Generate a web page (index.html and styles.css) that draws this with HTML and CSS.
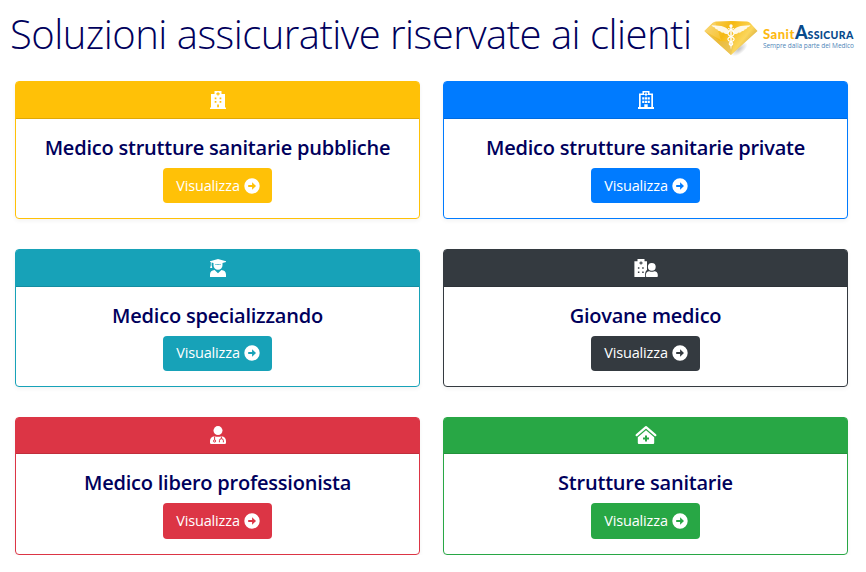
FILE: index.html
```
<!DOCTYPE html>
<html lang="it">
<head>
  <meta charset="UTF-8" />
  <meta name="viewport" content="width=device-width, initial-scale=1.0"/>
  <title>Soluzioni assicurative</title>
  <link rel="stylesheet" href="styles.css">
</head>
<body>

  <svg class="sprite" aria-hidden="true">
    <symbol id="arrow" viewBox="0 0 16 16">
      <path fill="currentColor" fill-rule="evenodd" d="M8 .3a7.700 7.700 0 1 0 0 15.400A7.700 7.700 0 0 0 8 .3zM4.200 6.900h3.900V4.200L12 8l-3.900 3.800V9.100H4.200z"/>
    </symbol>
  </svg>

  <header class="top">
    <h1>Soluzioni assicurative riservate ai clienti</h1>
    <div class="logo">
      <svg class="gem" width="54" height="36" viewBox="0 0 54 36">
        <defs>
          <linearGradient id="gold" x1="0" y1="0" x2="1" y2=".5">
            <stop offset="0" stop-color="#f9d46a"/>
            <stop offset=".45" stop-color="#f5b912"/>
            <stop offset=".8" stop-color="#fbd65c"/>
            <stop offset="1" stop-color="#d5a93c"/>
          </linearGradient>
          <radialGradient id="shade">
            <stop offset="0" stop-color="#999" stop-opacity=".6"/>
            <stop offset="1" stop-color="#999" stop-opacity="0"/>
          </radialGradient>
        </defs>
        <ellipse cx="35" cy="29" rx="10" ry="5" fill="url(#shade)" transform="rotate(-38 35 29)"/>
        <path fill="url(#gold)" d="M.3 11 8.500 3Q10 1.500 12 1.400 27 .4 43 1.400q2 .1 3.200 1.600L53.500 11 27 35z"/>
        <path fill="#e3bd58" opacity=".6" d="M.3 11 27 35l3-13-14-1z"/>
        <path fill="#fff" opacity=".15" d="M11 1.500 17 20 .3 11z"/>
        <g fill="#fff">
          <path d="M26 11.500C22 7 19 5.500 7.500 5.300c1 1.500 2 2 3.500 2.300-.3.900.9 1.700 2.500 1.900 0 1 1.200 1.700 2.800 1.700.3 1.100 1.700 1.700 3.200 1.400 1 1.400 3 1.900 4.500 1.200zM28 11.500C32 7 35 5.500 46.500 5.300c-1 1.500-2 2-3.500 2.300.3.900-.9 1.700-2.500 1.900 0 1-1.200 1.700-2.800 1.700-.3 1.100-1.700 1.700-3.200 1.400-1 1.400-3 1.900-4.500 1.200z" opacity=".88"/>
          <circle cx="27" cy="6" r="1.700"/>
          <path d="M26.300 7h1.400v18L27 30l-.7-5z"/>
        </g>
        <path fill="none" stroke="#fff" stroke-width="1.100" d="M24 8.500c6 1.500 8.500 6 3 8-4.500 1.800-4 4 0 5.300 2.800 1.200 2 3 0 3.800M30 8.500c-6 1.500-8.500 6-3 8 4.500 1.800 4 4 0 5.300-2.800 1.200-2 3 0 3.800"/>
      </svg>
      <div class="logo-text">
        <div class="brand"><span class="sanit">Sanit</span><span class="big">A</span><span class="rest">SSICURA</span></div>
        <div class="tagline">Sempre dalla parte del Medico</div>
      </div>
    </div>
  </header>

  <main class="cards">

    <div class="card warning">
      <div class="card-header">
        <svg width="18" height="18" viewBox="0 0 18 18">
          <path fill="currentColor" fill-rule="evenodd" d="M5.500 0h7v3H16v13.500h1V18H1v-1.500h1V3h3.500zM8.400 1.200v1H7.300v1.200h1.100v1.100h1.200V3.400h1.100V2.200H9.600v-1zM5.700 6.500v1.700h1.700V6.500zm4.900 0v1.700h1.700V6.500zm-4.900 3.500v1.700h1.700V10zm4.900 0v1.700h1.700V10zM8.200 13.500v2.700h1.700v-2.700z"/>
        </svg>
      </div>
      <div class="card-body">
        <h5>Medico strutture sanitarie pubbliche</h5>
        <a class="btn">Visualizza <svg width="16" height="16"><use href="#arrow"/></svg></a>
      </div>
    </div>

    <div class="card primary">
      <div class="card-header">
        <svg width="18" height="18" viewBox="0 0 18 18">
          <path fill="currentColor" fill-rule="evenodd" d="M5.500 0h7v2.500H16V16h1v2H1v-2h1V2.500h3.500zM7 1.500V4H3.700v12h3.600v-2.800h3.400V16h3.600V4H11V1.500z"/>
          <path fill="currentColor" d="M8.400 1.800h1.200v1.100h1.100v1.200H9.600v1.100H8.400V4.100H7.300V2.900h1.100zM5.200 6.200h2.200v2.200H5.200zM10.600 6.200h2.200v2.200h-2.200zM5.200 9.700h2.200v2.200H5.200zM10.600 9.700h2.200v2.200h-2.200zM8 6.200h2v2.200H8zM8 9.700h2v2.200H8z"/>
        </svg>
      </div>
      <div class="card-body">
        <h5>Medico strutture sanitarie private</h5>
        <a class="btn">Visualizza <svg width="16" height="16"><use href="#arrow"/></svg></a>
      </div>
    </div>

    <div class="card info">
      <div class="card-header">
        <svg width="18" height="18" viewBox="0 0 18 18">
          <path fill="currentColor" d="M9 0 17 2.200v.8l-3.500 1v2.300a4.500 4.500 0 0 1-9 0V4L2.600 3.500v2.700L3.300 9H1.100l.700-2.800V3L1 2.900v-.7zM5.600 11 9 14.300l3.400-3.300c2.900.2 4.600 1.900 4.600 4.500V18H1v-2.500C1 12.900 2.700 11.200 5.600 11z"/>
          <path class="cut" d="M6 4.900c2 .5 4 .5 6 0v.6c-2 .5-4 .5-6 0z"/>
        </svg>
      </div>
      <div class="card-body">
        <h5>Medico specializzando</h5>
        <a class="btn">Visualizza <svg width="16" height="16"><use href="#arrow"/></svg></a>
      </div>
    </div>

    <div class="card dark">
      <div class="card-header">
        <svg width="24" height="18" viewBox="0 0 24 18">
          <path fill="currentColor" fill-rule="evenodd" d="M3.500 0h7v2.200H13V11c-1.200 1-1.900 2.500-1.900 4.200V18H.4V2.200h3.100zM6.400 2.400v1H5.300v1.200h1.100v1h1.200v-1h1.100V3.400H7.600v-1zM3.900 8.200v1.500h1.500V8.200zm4.300 0v1.500h1.500V8.200zm-4.300 4.300V14h1.500v-1.500zm4.300 0V14h1.500v-1.500z"/>
          <circle cx="17.800" cy="7.800" r="3.900" fill="currentColor"/>
          <path fill="currentColor" d="M15.300 12.300q2.500 1 5 0c2.200 0 3.500 1.600 3.500 3.700v1.200q0 .8-.8.8H12.700q-.8 0-.8-.8V16c0-2.100 1.300-3.700 3.400-3.700z"/>
        </svg>
      </div>
      <div class="card-body">
        <h5>Giovane medico</h5>
        <a class="btn">Visualizza <svg width="16" height="16"><use href="#arrow"/></svg></a>
      </div>
    </div>

    <div class="card danger">
      <div class="card-header">
        <svg width="18" height="18" viewBox="0 0 18 18">
          <circle cx="9" cy="4.600" r="4.500" fill="currentColor"/>
          <path fill="currentColor" d="M5.500 10.200q3.500 1.300 7 0c2.900.3 4.500 2.100 4.500 4.700v1.800q0 1.300-1.300 1.300H2.300Q1 18 1 16.700v-1.800c0-2.600 1.600-4.400 4.500-4.700z"/>
          <g class="line">
            <path d="M5.600 10.500v3.300M12.400 10.500v2.200M10.400 16.300v-1.600a2 2 0 0 1 4 0v1.600"/>
            <circle cx="5.600" cy="15" r="1.100"/>
          </g>
        </svg>
      </div>
      <div class="card-body">
        <h5>Medico libero professionista</h5>
        <a class="btn">Visualizza <svg width="16" height="16"><use href="#arrow"/></svg></a>
      </div>
    </div>

    <div class="card success">
      <div class="card-header">
        <svg width="22" height="18" viewBox="0 0 22 18">
          <path fill="none" stroke="currentColor" stroke-width="2.200" stroke-linecap="round" stroke-linejoin="round" d="M1.700 9.200 11 1.200l9.300 8"/>
          <path fill="currentColor" fill-rule="evenodd" d="m11 4.300 8.200 6.900V17q0 1-1 1H3.800q-1 0-1-1v-5.800zM10 9.500v2H8v2h2v2h2v-2h2v-2h-2v-2z"/>
        </svg>
      </div>
      <div class="card-body">
        <h5>Strutture sanitarie</h5>
        <a class="btn">Visualizza <svg width="16" height="16"><use href="#arrow"/></svg></a>
      </div>
    </div>

  </main>

</body>
</html>
```
FILE: styles.css
```
* {
  box-sizing: border-box;
  margin: 0;
  padding: 0;
}

body {
  background: #fff;
  color: #00005c;
  font-family: 'Segoe UI', 'Open Sans', 'Noto Sans', sans-serif;
  overflow: hidden;
}

.sprite {
  display: block;
  width: 0;
  height: 0;
}

.top {
  display: flex;
  height: 81.4px;
  padding-left: 10px;
}

h1 {
  width: 694px;
  font-size: 40px;
  font-weight: 300;
  line-height: 68px;
  letter-spacing: -0.52px;
  white-space: nowrap;
}

.logo {
  display: flex;
  padding-top: 20px;
}

.logo-text {
  padding: 3px 0 0 5px;
  white-space: nowrap;
}

.brand {
  height: 19px;
  font-family: Lato, sans-serif;
  font-weight: 900;
  line-height: 18px;
  color: #084a8c;
}

.sanit {
  font-size: 13px;
  letter-spacing: 0.5px;
  color: #fdb913;
}

.big {
  font-size: 18px;
}

.rest {
  font-size: 10.5px;
  letter-spacing: 0.35px;
}

.tagline {
  font-size: 6.5px;
  line-height: 8px;
  letter-spacing: -0.05px;
  color: #4f86b8;
}

.cards {
  display: grid;
  grid-template-columns: 405px 405px;
  gap: 29.6px 23px;
  padding-left: 15px;
}

.card {
  height: 138px;
  border: 1px solid var(--tone);
  border-radius: 4px;
  box-shadow: 0 2px 4px rgba(0,0,0,0.05);
  text-align: center;
}

.warning { --tone: #ffc107; }
.primary { --tone: #007bff; }
.info { --tone: #17a2b8; }
.dark { --tone: #343a40; }
.danger { --tone: #dc3545; }
.success { --tone: #28a745; }

.card-header {
  display: flex;
  justify-content: center;
  align-items: center;
  height: 36.8px;
  border-bottom: 1px solid rgba(0,0,0,0.125);
  border-radius: 2px 2px 0 0;
  background-color: var(--tone);
  color: #fff;
}

.cut {
  fill: var(--tone);
}

.line {
  fill: none;
  stroke: var(--tone);
  stroke-width: 1;
}

.card-body {
  display: flex;
  flex-direction: column;
  align-items: center;
  padding-top: 16px;
}

h5 {
  height: 33px;
  font-size: 20px;
  font-weight: 600;
  line-height: 25px;
  letter-spacing: -0.22px;
  white-space: nowrap;
}

.btn {
  display: flex;
  justify-content: center;
  align-items: center;
  gap: 4px;
  width: 109px;
  height: 35.2px;
  padding-left: 1px;
  border-radius: 4px;
  background-color: var(--tone);
  color: #fff;
  font-size: 14.5px;
  letter-spacing: -0.15px;
  line-height: 36px;
  white-space: nowrap;
}
```
